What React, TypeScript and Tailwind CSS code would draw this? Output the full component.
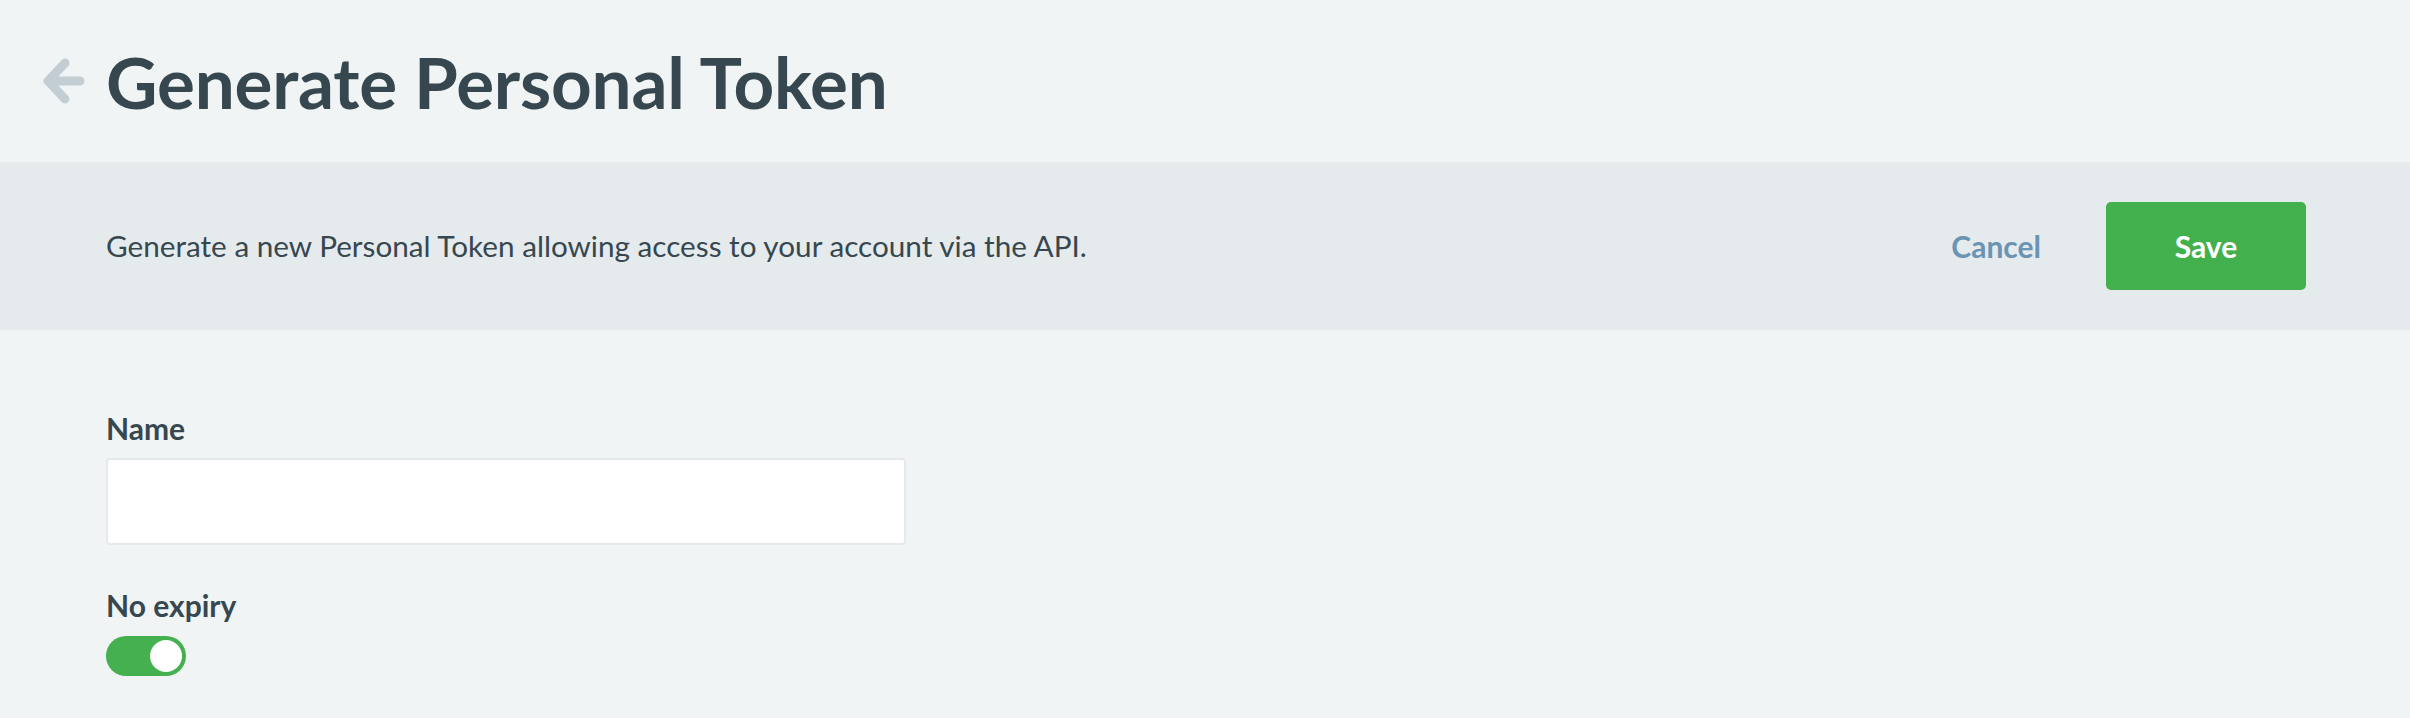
import { useState } from "react";

function BackArrow() {
  return (
    <svg width="42" height="46" viewBox="0 0 42 46" fill="none" aria-hidden="true">
      <path
        d="M22 5L5 23L22 41M5 23H37"
        stroke="#c2ced3"
        strokeWidth="9"
        strokeLinecap="round"
        strokeLinejoin="round"
      />
    </svg>
  );
}

export default function App() {
  const [noExpiry, setNoExpiry] = useState(true);
  const [name, setName] = useState("");

  return (
    <div className="min-h-screen w-full bg-[#f0f4f5] text-[#37474f] font-['Lato','Noto_Sans',sans-serif]">
      <div className="flex h-[162px] items-center pl-[43px]">
        <button className="mr-[21px] flex items-center" title="Back">
          <BackArrow />
        </button>
        <h1 className="text-[71px] font-bold leading-none tracking-[-0.2px]">Generate Personal Token</h1>
      </div>

      <div className="flex h-[168px] items-center justify-between bg-[#e5eaed] px-[106px] pr-[104px]">
        <p className="text-[29.7px] leading-none">
          Generate a new Personal Token allowing access to your account via the API.
        </p>
        <div className="flex items-center">
          <button className="mr-[65px] text-[30px] font-bold leading-none text-[#6a94b3]">Cancel</button>
          <button className="flex h-[88px] w-[200px] items-center justify-center rounded-[5px] bg-[#43b04e] text-[30px] font-bold leading-none text-white">
            Save
          </button>
        </div>
      </div>

      <div className="px-[106px] pt-[83px]">
        <label className="block text-[30px] font-bold leading-none">Name</label>
        <input
          value={name}
          onChange={(e) => setName(e.target.value)}
          className="mt-[15px] block h-[87px] w-[800px] rounded-[4px] border-2 border-[#e4e9ec] bg-white px-4 text-[29px] outline-none"
        />

        <label className="mt-[45px] block text-[30px] font-bold leading-none">No expiry</label>
        <button
          onClick={() => setNoExpiry(!noExpiry)}
          className={
            noExpiry
              ? "mt-[16px] flex h-[40px] w-[80px] items-center justify-end rounded-full bg-[#44b04f] p-[4px]"
              : "mt-[16px] flex h-[40px] w-[80px] items-center justify-start rounded-full bg-[#c2ced3] p-[4px]"
          }
        >
          <span className="block h-[32px] w-[32px] rounded-full bg-white" />
        </button>
      </div>
    </div>
  );
}
